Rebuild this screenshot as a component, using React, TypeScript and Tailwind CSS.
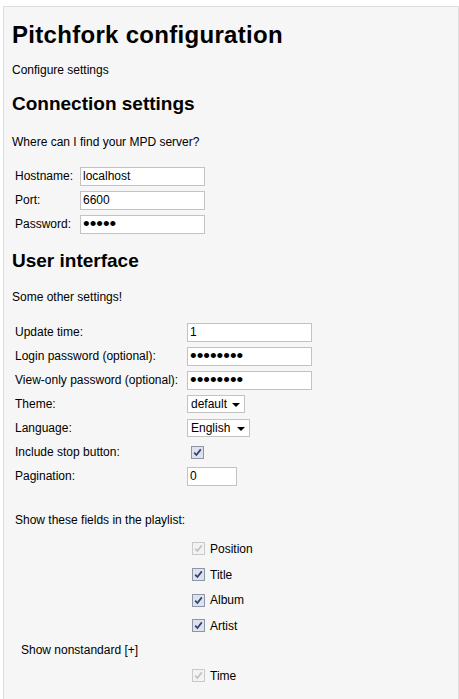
import React from "react";

const fontStack = { fontFamily: '"Liberation Sans", Arial, sans-serif' };

function Check({ disabled }: { disabled?: boolean }) {
  return (
    <span
      className={
        disabled
          ? "inline-flex h-[13px] w-[13px] shrink-0 items-center justify-center border border-[#cacaca] bg-[#f3f3f3]"
          : "inline-flex h-[13px] w-[13px] shrink-0 items-center justify-center border border-[#8e95a6] bg-[#dfe2ea]"
      }
    >
      <svg width="9" height="9" viewBox="0 0 9 9">
        <path
          d="M1.2 4.6 L3.4 7 L7.8 1.4"
          fill="none"
          stroke={disabled ? "#c2c2c2" : "#2d3f78"}
          strokeWidth="1.7"
          strokeLinejoin="miter"
        />
      </svg>
    </span>
  );
}

function TextInput({ value, width }: { value: string; width: string }) {
  return (
    <input
      readOnly
      defaultValue={value}
      className={`h-[19px] ${width} border border-[#c3c3c3] bg-white px-[2px] text-[12px] text-black outline-none`}
      style={fontStack}
    />
  );
}

function PasswordInput({ value }: { value: string }) {
  return (
    <input
      readOnly
      type="password"
      defaultValue={value}
      className="h-[19px] w-[125px] border border-[#c3c3c3] bg-white px-[2px] text-[19px] leading-[17px] text-black outline-none"
      style={fontStack}
    />
  );
}

function Select({ value, width }: { value: string; width: string }) {
  return (
    <div
      role="combobox"
      aria-expanded="false"
      className={`flex h-[18px] ${width} items-center border border-[#c3c3c3] bg-white pl-[3px] text-[12px] leading-[16px] text-black`}
    >
      <span>{value}</span>
      <span className="ml-auto mr-[4px] mt-[1px] h-0 w-0 border-x-[4px] border-t-[4px] border-x-transparent border-t-black" />
    </div>
  );
}

function Row1({ label, children }: { label: string; children: React.ReactNode }) {
  return (
    <div className="grid h-[24px] grid-cols-[65px_auto] items-center pl-[3px]">
      <span className="text-[12px] leading-[16px]">{label}</span>
      <div className="flex">{children}</div>
    </div>
  );
}

function Row2({ label, children }: { label: string; children: React.ReactNode }) {
  return (
    <div className="grid h-[24px] grid-cols-[172px_auto] items-center pl-[3px]">
      <span className="text-[12px] leading-[16px]">{label}</span>
      <div className="flex items-center">{children}</div>
    </div>
  );
}

function FieldRow({ label, disabled }: { label: string; disabled?: boolean }) {
  return (
    <label className="flex h-[25.7px] items-center gap-[5px] pl-[180px]">
      <Check disabled={disabled} />
      <span className="text-[12px] leading-[16px]">{label}</span>
    </label>
  );
}

export default function App() {
  return (
    <div className="min-h-[699px] bg-white pl-[3px] pt-[6px]" style={fontStack}>
      <div className="h-[693px] overflow-hidden border-l border-r border-t border-[#dedede] bg-[#f6f6f6] pl-[8px] text-black">
        <h1 className="mt-[14px] text-[24px] font-bold leading-[28px] tracking-[0.3px]">
          Pitchfork configuration
        </h1>
        <p className="mt-[13px] text-[12px] leading-[16px]">Configure settings</p>

        <h2 className="mt-[14px] text-[19px] font-bold leading-[24px]">Connection settings</h2>
        <p className="mt-[18px] text-[12px] leading-[16px]">Where can I find your MPD server?</p>

        <div className="mt-[14px] flex flex-col">
          <Row1 label="Hostname:">
            <TextInput value="localhost" width="w-[125px]" />
          </Row1>
          <Row1 label="Port:">
            <TextInput value="6600" width="w-[125px]" />
          </Row1>
          <Row1 label="Password:">
            <PasswordInput value="abcde" />
          </Row1>
        </div>

        <h2 className="mt-[13px] text-[19px] font-bold leading-[24px]">User interface</h2>
        <p className="mt-[16px] text-[12px] leading-[16px]">Some other settings!</p>

        <div className="mt-[15px] flex flex-col">
          <Row2 label="Update time:">
            <TextInput value="1" width="w-[125px]" />
          </Row2>
          <Row2 label="Login password (optional):">
            <PasswordInput value="abcdefgh" />
          </Row2>
          <Row2 label="View-only password (optional):">
            <PasswordInput value="abcdefgh" />
          </Row2>
          <Row2 label="Theme:">
            <Select value="default" width="w-[58px]" />
          </Row2>
          <Row2 label="Language:">
            <Select value="English" width="w-[63px]" />
          </Row2>
          <Row2 label="Include stop button:">
            <span className="pl-[4px]">
              <Check />
            </span>
          </Row2>
          <Row2 label="Pagination:">
            <TextInput value="0" width="w-[50px]" />
          </Row2>
        </div>

        <p className="mt-[24px] pl-[3px] text-[12px] leading-[16px]">Show these fields in the playlist:</p>
        <div className="mt-[8px] flex flex-col">
          <FieldRow label="Position" disabled />
          <FieldRow label="Title" />
          <FieldRow label="Album" />
          <FieldRow label="Artist" />
        </div>
        <p className="mt-[3px] pl-[9px] text-[12px] leading-[16px]">Show nonstandard [+]</p>
        <div className="mt-[5px]">
          <FieldRow label="Time" disabled />
        </div>
      </div>
    </div>
  );
}
